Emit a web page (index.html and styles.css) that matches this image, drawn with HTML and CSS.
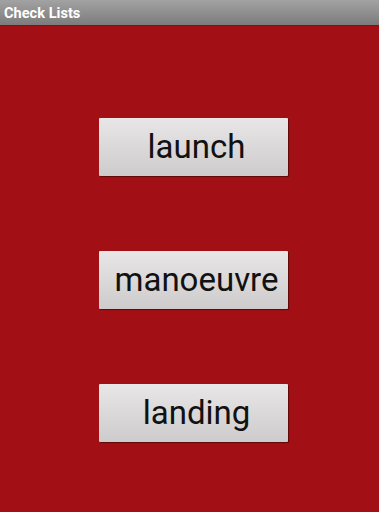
FILE: index.html
```html
<!DOCTYPE html>
<html>
<head>
<meta charset="utf-8">
<link rel="stylesheet" href="styles.css">
</head>
<body>
<div class="app">
  <header class="titlebar">Check Lists</header>
  <main class="content">
    <button class="btn">launch</button>
    <button class="btn">manoeuvre</button>
    <button class="btn">landing</button>
  </main>
</div>
</body>
</html>
```
FILE: styles.css
```css
html, body {
  margin: 0;
  padding: 0;
  height: 100%;
}
body {
  background: #a21015;
  font-family: Roboto, "Noto Sans", sans-serif;
}
.app {
  display: flex;
  flex-direction: column;
  height: 100%;
}
.titlebar {
  height: 26px;
  box-sizing: border-box;
  padding: 5px 0 0 4px;
  background: linear-gradient(#a2a2a2, #7c7c7c);
  border-bottom: 1px solid #8a0d10;
  color: #ffffff;
  font-weight: bold;
  font-size: 14.6px;
  line-height: 16px;
}
.content {
  display: flex;
  flex-direction: column;
  align-items: flex-start;
  padding: 92px 0 0 99px;
  gap: 75px;
}
.btn {
  width: 189px;
  height: 58px;
  margin: 0;
  padding: 0 0 0 6px;
  border: none;
  border-radius: 1px;
  background: linear-gradient(#e8e6e6, #cdcbcb);
  box-shadow: 1px 1px 1px rgba(40, 0, 0, 0.55);
  color: #111111;
  font-family: Roboto, "Noto Sans", sans-serif;
  font-size: 33px;
  line-height: 38px;
  text-align: center;
}
```
